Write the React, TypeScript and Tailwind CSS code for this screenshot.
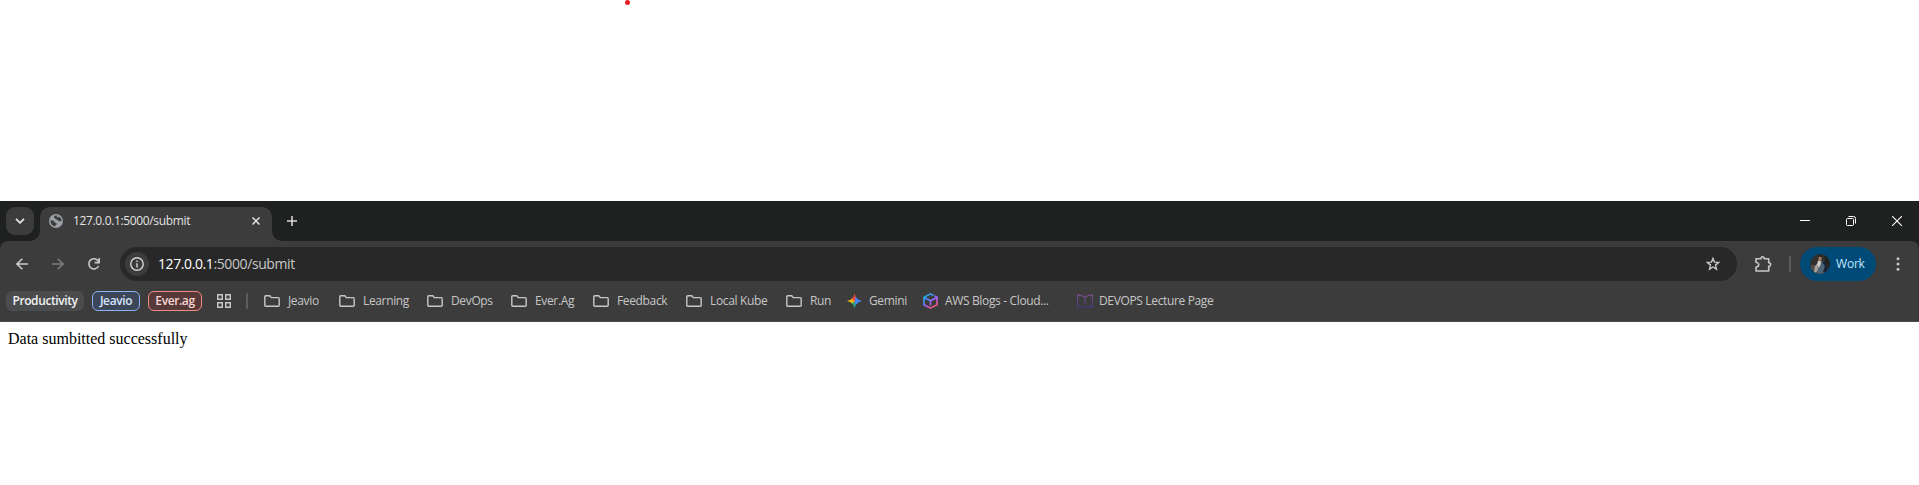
import type { ReactNode } from "react";

const UI = "font-['Open_Sans','Noto_Sans',sans-serif]";

function Folder() {
  return (
    <svg width="16" height="12" viewBox="0 0 16 12" fill="none" stroke="#c7c7c7" strokeWidth="1.4" className="shrink-0">
      <path d="M.8 1.8Q.8.8 1.8.8H5.8L7.3 2.6H14.2Q15.2 2.6 15.2 3.6V10.3Q15.2 11.2 14.2 11.2H1.8Q.8 11.2.8 10.3Z" />
    </svg>
  );
}

function Gemini() {
  return (
    <div
      className="h-[15px] w-[15px] shrink-0 bg-[conic-gradient(from_0deg,#f04a48_0deg,#4285f4_35deg,#3f8cff_150deg,#22a565_185deg,#3fb35b_220deg,#fbbc04_265deg,#f6b21a_300deg,#f04a48_335deg)] [clip-path:polygon(50%_0,58%_24%,76%_42%,100%_50%,76%_58%,58%_76%,50%_100%,42%_76%,24%_58%,0_50%,24%_42%,42%_24%)]"
    />
  );
}

function Cube() {
  return (
    <svg width="15" height="16" viewBox="0 0 15 16" fill="none" strokeWidth="1.6" strokeLinejoin="round" strokeLinecap="round" className="shrink-0">
      <defs>
        <linearGradient id="cube" x1="2" y1="1" x2="12" y2="15" gradientUnits="userSpaceOnUse">
          <stop offset="0" stopColor="#18b7d6" />
          <stop offset=".35" stopColor="#4a8cff" />
          <stop offset=".6" stopColor="#b45cff" />
          <stop offset="1" stopColor="#ff5a4e" />
        </linearGradient>
      </defs>
      <path stroke="url(#cube)" d="M10 2.2 7.5.9 1 4.3V11.7L7.5 15.1 14 11.7V4.3L12 3.2M1.2 4.5 7.5 7.8 13.8 4.5M7.5 7.8V12" />
    </svg>
  );
}

function Book() {
  return (
    <svg width="16" height="15" viewBox="0 0 16 15" fill="none" strokeWidth="1.1" className="shrink-0">
      <defs>
        <linearGradient id="book" x1="0" y1="0" x2="0" y2="15" gradientUnits="userSpaceOnUse">
          <stop offset="0" stopColor="#80508f" />
          <stop offset="1" stopColor="#40357d" />
        </linearGradient>
      </defs>
      <path stroke="url(#book)" d="M6 13.2 4.3 12.4.6 13.4V.9L4.2 1.2 8 3.3 11.8 1.2 15.4.9V13.4L11.7 12.4 10 13.2M8 3.3V10" />
      <path stroke="#40357d" d="M6.5 13.9H9.5" />
    </svg>
  );
}

type Mark = { label: string; icon: ReactNode; box: string; gap: string; track: string };

const marks: Mark[] = [
  { label: "Jeavio", icon: <Folder />, box: "w-[75px]", gap: "gap-2", track: "tracking-[-0.35px]" },
  { label: "Learning", icon: <Folder />, box: "w-[88px]", gap: "gap-2", track: "tracking-[-0.35px]" },
  { label: "DevOps", icon: <Folder />, box: "w-[84px]", gap: "gap-2", track: "tracking-[-0.35px]" },
  { label: "Ever.Ag", icon: <Folder />, box: "w-[82px]", gap: "gap-2", track: "tracking-[-0.35px]" },
  { label: "Feedback", icon: <Folder />, box: "w-[93px]", gap: "gap-2", track: "tracking-[-0.35px]" },
  { label: "Local Kube", icon: <Folder />, box: "w-[100px]", gap: "gap-2", track: "tracking-[-0.35px]" },
  { label: "Run", icon: <Folder />, box: "w-[61px]", gap: "gap-2", track: "tracking-[-0.35px]" },
  { label: "Gemini", icon: <Gemini />, box: "w-[76px]", gap: "gap-[7px]", track: "tracking-[-0.35px]" },
  { label: "AWS Blogs - Cloud...", icon: <Cube />, box: "w-[154px]", gap: "gap-[7px]", track: "tracking-[-0.35px]" },
  { label: "DEVOPS Lecture Page", icon: <Book />, box: "w-[150px]", gap: "gap-[6px]", track: "tracking-[-0.35px]" },
];

function TabStrip() {
  return (
    <div className="flex h-10 items-end bg-[#1f2120] pl-[6px]">
      <div className="mb-[6px] flex h-7 w-7 items-center justify-center rounded-[9px] bg-[#3c3c3c]">
        <svg width="10" height="6" viewBox="0 0 10 6" fill="none" stroke="#e3e3e3" strokeWidth="1.8"><path d="M1 .8 5 4.8 9 .8" /></svg>
      </div>
      <svg width="10" height="10" className="-ml-[4px] shrink-0" fill="#3c3c3c"><path d="M10 0A10 10 0 0 1 0 10H10Z" /></svg>
      <div className="flex h-[34px] w-[232px] items-center rounded-t-[10px] bg-[#3c3c3c] pb-[6px] pl-[9px]">
        <svg width="14" height="14" viewBox="0 0 14 14" className="shrink-0">
          <circle cx="7" cy="7" r="7" fill="#9aa0a6" />
          <path d="M7 1.6Q4.5 1.5 4.8 3.8Q6.8 3.8 6.8 5.6Q9.2 5.2 9.2 7.3Q11 6.8 12.5 7.5A5.6 5.6 0 0 0 10.2 2.5Q9.4 3.7 8.2 3.2Q7.2 2.5 8.2 1.6ZM1.5 6.2A5.6 5.6 0 0 0 6.2 12.5Q6 10.6 7.8 10.5Q7.9 8.3 5.6 8.5Q5.6 6.7 3.7 6.6Z" fill="#3c3c3c" />
        </svg>
        <span className="ml-[10px] w-[179px] whitespace-nowrap text-[12px] leading-4 tracking-[-0.35px] text-[#e3e3e3]">127.0.0.1:5000/submit</span>
        <svg width="8" height="8" viewBox="0 0 8 8" stroke="#e3e3e3" strokeWidth="1.5" className="shrink-0"><path d="M.5.5 7.5 7.5M7.5.5.5 7.5" /></svg>
      </div>
      <svg width="10" height="10" className="shrink-0" fill="#3c3c3c"><path d="M0 0A10 10 0 0 0 10 10H0Z" /></svg>
      <svg width="10" height="10" viewBox="0 0 10 10" stroke="#d5d5d5" strokeWidth="1.6" className="mb-[15px] ml-[5px]"><path d="M5 0V10M0 5H10" /></svg>
      <div className="ml-auto mb-[15px] flex gap-9 pr-[17px]">
        <svg width="10" height="10" stroke="#fff"><path d="M0 4.5H10" /></svg>
        <svg width="10" height="10" viewBox="0 0 10 10" fill="none" stroke="#fff"><rect x=".5" y="2.5" width="7" height="7" rx="1" /><path d="M2.5.5H7.5Q9.5.5 9.5 2.5V7.5" /></svg>
        <svg width="10" height="10" stroke="#fff" strokeWidth="1.1"><path d="M0 0 10 10M10 0 0 10" /></svg>
      </div>
    </div>
  );
}

function Avatar() {
  return (
    <svg width="20" height="20" viewBox="0 0 20 20" className="shrink-0">
      <defs><clipPath id="face"><circle cx="10" cy="10" r="10" /></clipPath></defs>
      <g clipPath="url(#face)">
        <path fill="#302f2d" d="M0 0H20V20H0Z" />
        <path fill="#202322" d="M14 0H20V13L15 9Z" />
        <path fill="#544b45" d="M1 11H5V20H1Z" />
        <path fill="#4e6275" d="M8 7 11 6 15 9 18 14 17 19 14 20H7L6 12Z" />
        <path fill="#172333" d="M12 8 15 12 13 18 17 19 18 13 15 8Z" />
        <path fill="#d8cdc2" d="M8 7 10 6 11 9 9 14 7 11Z" />
        <path fill="#a97865" d="M8.5 2.8Q10 1.5 11.5 3V5.5L10 7.5 8.5 6Z" />
        <path fill="#1d1d1e" d="M8.2 3Q8.5.8 10.5 1.2Q12 1.4 11.8 3.4L10 2.6Z" />
        <path fill="#aaa39b" d="M5 12 7 10 8 15 6 19 4 18Z" />
      </g>
    </svg>
  );
}

function Toolbar() {
  return (
    <div className="flex h-[46px] items-center pl-4">
      <svg width="12" height="12" viewBox="0 0 12 12" fill="none" stroke="#c7c7c7" strokeWidth="1.6"><path d="M12 6H1M6.3.7 1 6 6.3 11.3" /></svg>
      <svg width="12" height="12" viewBox="0 0 12 12" fill="none" stroke="#7b7b7b" strokeWidth="1.6" className="ml-6"><path d="M0 6H11M5.7.7 11 6 5.7 11.3" /></svg>
      <svg width="12" height="12" viewBox="0 0 12 12" fill="none" stroke="#c7c7c7" strokeWidth="1.6" className="ml-6"><path d="M10.6 8A5.1 5.1 0 1 1 10 2.7L11 4.1M11.2 0V4.6H6.6" /></svg>
      <div className="ml-5 flex h-[34px] w-[1617px] items-center rounded-full bg-[#282828] pl-[5px] pr-[17px]">
        <div className="flex h-6 w-6 items-center justify-center rounded-full bg-[#3c3c3c]">
          <svg width="14" height="14" viewBox="0 0 14 14" fill="none" stroke="#d5d5d5" strokeWidth="1.4"><circle cx="7" cy="7" r="6.2" /><path d="M7 6.2V10.4M7 3.6V5" /></svg>
        </div>
        <span className="ml-[9px] text-[14px] leading-5 tracking-[-0.4px] text-[#c7c7c7]"><span className="text-white">127.0.0.1</span>:5000/submit</span>
        <svg width="14" height="14" viewBox="0 0 14 14" fill="none" stroke="#c7c7c7" strokeWidth="1.4" className="ml-auto"><path d="M7 1.4 8.5 5.1 12.7 5.4 9.5 8.1 10.5 12.2 7 10 3.5 12.2 4.5 8.1 1.3 5.4 5.5 5.1Z" /></svg>
      </div>
      <svg width="17" height="16" viewBox="0 0 17 16" fill="none" stroke="#c7c7c7" strokeWidth="1.6" className="ml-[18px]"><path d="M1 2.7H6Q6 .8 7.6.8T9.2 2.7H13.7V6.7Q15.7 6.9 15.7 8.5T13.7 10.4V15H1V11.2Q3.7 10.7 3.7 8.7T1 6.2Z" strokeLinejoin="round" /></svg>
      <div className="ml-[17px] h-4 w-[2px] rounded bg-[#5c5d5d]" />
      <div className="ml-[9px] flex h-[34px] w-[76px] items-center gap-[6px] rounded-full bg-[#004a77] pl-[10px]">
        <Avatar />
        <span className="text-[12px] font-medium leading-4 tracking-[-0.2px] text-[#c2e7ff]">Work</span>
      </div>
      <svg width="4" height="14" fill="#c7c7c7" className="ml-5"><circle cx="2" cy="1.7" r="1.5" /><circle cx="2" cy="7" r="1.5" /><circle cx="2" cy="12.3" r="1.5" /></svg>
    </div>
  );
}

function BookmarksBar() {
  return (
    <div className="flex h-[35px] items-center whitespace-nowrap border-b border-[#484949] pb-[6px] pl-[6px] text-[12px] leading-4 text-[#c7c7c7]">
      <div className="flex h-5 w-[78px] items-center justify-center rounded-md bg-[#4a4c4e] font-semibold tracking-[-0.4px] text-[#f1f3f4]">Productivity</div>
      <div className="ml-2 flex h-5 w-12 items-center justify-center rounded-md border border-[#8ab4f8] bg-[#3c4659] font-semibold tracking-[-0.4px] text-[#d7e5fc]">Jeavio</div>
      <div className="ml-2 flex h-5 w-[54px] items-center justify-center rounded-md border border-[#f28b82] bg-[#563938] font-semibold tracking-[-0.4px] text-[#fad5d2]">Ever.ag</div>
      <svg width="14" height="14" fill="none" stroke="#c7c7c7" strokeWidth="1.5" className="ml-[15px] shrink-0"><path d="M.75.75H5.25V5.25H.75ZM8.75.75H13.25V5.25H8.75ZM.75 8.75H5.25V13.25H.75ZM8.75 8.75H13.25V13.25H8.75Z" /></svg>
      <div className="ml-[15px] mr-4 h-4 w-[2px] rounded bg-[#5c5d5d]" />
      {marks.map((m) => (
        <div key={m.label} className={`flex shrink-0 items-center ${m.box} ${m.gap}`}>
          {m.icon}
          <span className={m.track}>{m.label}</span>
        </div>
      ))}
    </div>
  );
}

export default function App() {
  return (
    <div className="h-[485px] w-full overflow-hidden bg-white">
      <div className="h-[201px] pl-[625px]">
        <div className="h-[5px] w-[5px] rounded-full bg-[#ed1c24]" />
      </div>
      <div className={`bg-[#1f2120] ${UI}`}>
        <TabStrip />
        <div className="rounded-t-[8px] bg-[#3c3c3c]">
          <Toolbar />
          <BookmarksBar />
        </div>
      </div>
      <p className="pl-2 pt-2 font-['Liberation_Serif',serif] text-[16px] leading-[18px] text-black">Data sumbitted successfully</p>
    </div>
  );
}
